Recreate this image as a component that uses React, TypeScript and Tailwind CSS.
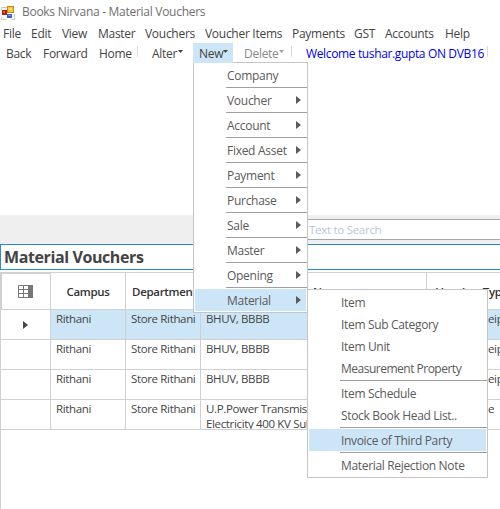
import type { ReactNode } from "react";

const menu: [string, string][] = [
  ["File", "w-[28px]"],
  ["Edit", "w-[31px]"],
  ["View", "w-[36px]"],
  ["Master", "w-[47px]"],
  ["Vouchers", "w-[60px]"],
  ["Voucher Items", "w-[87px]"],
  ["Payments", "w-[62px]"],
  ["GST", "w-[31px]"],
  ["Accounts", "w-[60px]"],
  ["Help", "w-[30px]"],
];

const newItems = ["Company", "Voucher", "Account", "Fixed Asset", "Payment", "Purchase", "Sale", "Master", "Opening", "Material"];

const subGroups = [
  ["Item", "Item Sub Category", "Item Unit", "Measurement Property"],
  ["Item Schedule", "Stock Book Head List.."],
  ["Invoice of Third Party"],
  ["Material Rejection Note"],
];

const rows = [
  { party: "BHUV, BBBB", type: "eipt", selected: true },
  { party: "BHUV, BBBB", type: "eipt", selected: false },
  { party: "BHUV, BBBB", type: "eipt", selected: false },
  { party: "U.P.Power Transmission Electricity 400 KV Sub", type: "e", selected: false },
];

function AppIcon() {
  return (
    <svg width="16" height="16" viewBox="0 0 16 16" className="shrink-0">
      <path d="M1.5 2.5h6M1.5 2.5v3M14.5 9v5.5h-3M1.5 12v2.5h5" stroke="#c6c6c6" fill="none" />
      <rect x="2" y="5" width="5" height="5" fill="#b81a0c" />
      <rect x="3" y="6" width="2" height="2" fill="#ee5a40" />
      <rect x="7.5" y="1.5" width="6" height="6" fill="#fdc81c" stroke="#c08a2a" />
      <rect x="9" y="3" width="3" height="2" fill="#ffe48a" />
      <rect x="7" y="9" width="5" height="4" fill="#2f63d6" />
      <rect x="8" y="10" width="3" height="1" fill="#6d9bf0" />
    </svg>
  );
}

function Down({ className }: { className: string }) {
  return (
    <svg width="5" height="3" viewBox="0 0 5 3" className={className}>
      <path d="M0 0h5L2.5 3z" fill="currentColor" />
    </svg>
  );
}

function Right({ className = "" }: { className?: string }) {
  return (
    <svg width="5" height="8" viewBox="0 0 5 8" className={className}>
      <path d="M0 0v8l5-4z" fill="currentColor" />
    </svg>
  );
}

function Cell({ className = "", children }: { className?: string; children?: ReactNode }) {
  return <div className={`shrink-0 overflow-hidden border-r border-[#d0d0d0] ${className}`}>{children}</div>;
}

export default function App() {
  return (
    <div className="relative flex h-[509px] w-[500px] flex-col overflow-hidden bg-white font-['Open_Sans','Noto_Sans',sans-serif] text-[12px] leading-[15px] tracking-[-0.28px] whitespace-nowrap text-[#444]">
      <div className="flex h-[24px] shrink-0 items-center pb-px">
        <div className="pt-[2px]"><AppIcon /></div>
        <span className="ml-[6px] text-[#707070]">Books Nirvana - Material Vouchers</span>
      </div>
      <div className="flex h-[19px] shrink-0 items-center pl-[3px]">
        {menu.map(([label, width]) => (
          <span key={label} className={`shrink-0 ${width}`}>{label}</span>
        ))}
      </div>
      <div className="flex h-[20px] shrink-0 items-center pl-[6px]">
        <span className="w-[37px]">Back</span>
        <span className="w-[56px]">Forward</span>
        <span className="w-[38px]">Home</span>
        <span className="mb-[3px] h-[11px] w-px bg-[#d9d9d9]" />
        <span className="ml-[14px] w-[26px]">Alter</span>
        <Down className="mb-[3px]" />
        <div className="ml-[10px] flex h-full w-[40px] items-center bg-[#cde6f7] pl-[6px]">
          <span className="w-[24px]">New</span>
          <Down className="mb-[3px]" />
        </div>
        <span className="ml-[11px] w-[35px] text-[#8a8a8a]">Delete</span>
        <Down className="mb-[3px] text-[#a0a0a0]" />
        <span className="mb-[3px] ml-[7px] h-[11px] w-px bg-[#d9d9d9]" />
        <span className="ml-[14px] w-[181px] tracking-[-0.36px] text-[#0000f0]">Welcome tushar.gupta ON DVB16</span>
        <span className="mb-[3px] h-[11px] w-px bg-[#d9d9d9]" />
      </div>
      <div className="h-[152px] shrink-0" />
      <div className="flex h-[29px] shrink-0 items-start bg-[#efefef] pt-[4px] pl-[304px]">
        <div className="flex h-[21px] flex-1 items-center border-y border-[#a6a6a6] bg-white pb-px pl-[5px] text-[11.5px] text-[#b8c7d8]">
          Text to Search
        </div>
      </div>
      <div className="flex h-[26px] w-[510px] shrink-0 items-center border border-[#2a8ad4] pb-px pl-[3px] text-[16px] leading-[20px] font-bold tracking-[-0.4px]">
        Material Vouchers
      </div>
      <div className="mt-[2px] flex w-[560px] flex-1 flex-col border-t border-l border-[#d0d0d0]">
        <div className="flex h-[37px] shrink-0 border-b border-[#d0d0d0] text-[11.5px] font-semibold tracking-[-0.3px] text-[#333]">
          <Cell className="flex w-[50px] items-center justify-center border-t border-l">
            <svg width="15" height="13" viewBox="0 0 15 13" className="mr-px">
              <path d="M.5 .5h14v12H.5zM0 4.5h10M0 8.5h10M5.5 0v13M10.5 0v13" fill="none" stroke="#777" />
              <path d="M10 0h5v13h-5z" fill="#777" />
            </svg>
          </Cell>
          <Cell className="flex w-[75px] items-center justify-center pt-px">Campus</Cell>
          <Cell className="flex w-[75px] items-center pt-px pl-[6px]">Department</Cell>
          <Cell className="flex w-[226px] items-center pt-px pl-[112px]">Name</Cell>
          <Cell className="flex w-[90px] items-center pt-px pl-[9px]">Voucher Type</Cell>
        </div>
        {rows.map((row, i) => (
          <div key={i} className="flex h-[30px] shrink-0 border-b border-[#d0d0d0] text-[11.5px] leading-[15px] tracking-[-0.35px]">
            <Cell className="flex w-[50px] items-center justify-center">{row.selected && <Right className="mr-px" />}</Cell>
            <div className={`flex ${row.selected ? "bg-[#cde6f7]" : ""}`}>
              <Cell className="w-[75px] pt-px pl-[5px]">Rithani</Cell>
              <Cell className="w-[75px] pt-px pl-[5px]">Store Rithani</Cell>
              <Cell className="w-[226px] pt-px pl-[5px]">
                <div className="w-[130px] whitespace-normal">{row.party}</div>
              </Cell>
              <Cell className="w-[90px] pt-px pl-[61px]">{row.type}</Cell>
            </div>
          </div>
        ))}
      </div>

      <div className="absolute top-[62px] left-[193px] flex h-[251px] w-[115px] flex-col border border-[#c6c6c6] bg-white px-px pt-px text-[#5a5a5a]">
        <div className="absolute -top-px -left-px h-px w-[40px] bg-[#cde6f7]" />
        {newItems.map((label, i) => (
          <div key={label} className="shrink-0">
            {i > 0 && <div className="-mr-px ml-[31px] h-[3px] border-t border-transparent"><div className="h-px bg-[#a0a0a0]" /></div>}
            <div className={`flex h-[22px] items-center justify-between pr-[5px] pl-[32px] ${label === "Material" ? "bg-[#cde6f7]" : ""}`}>
              <span>{label}</span>
              {i > 0 && <Right />}
            </div>
          </div>
        ))}
      </div>

      <div className="absolute top-[289px] left-[307px] flex h-[189px] w-[181px] flex-col border border-[#c6c6c6] bg-white px-px pt-px tracking-[-0.33px] text-[#5a5a5a]">
        {subGroups.map((group, i) => (
          <div key={i}>
            {i > 0 && <div className="-mr-px ml-[31px] h-[3px] border-t border-transparent"><div className="h-px bg-[#a0a0a0]" /></div>}
            {group.map((label) => (
              <div
                key={label}
                className={`flex h-[22px] items-center pl-[32px] ${label === "Invoice of Third Party" ? "bg-[#cde6f7]" : ""} ${label === "Measurement Property" ? "tracking-[-0.5px]" : ""}`}
              >
                {label}
              </div>
            ))}
          </div>
        ))}
      </div>
    </div>
  );
}
